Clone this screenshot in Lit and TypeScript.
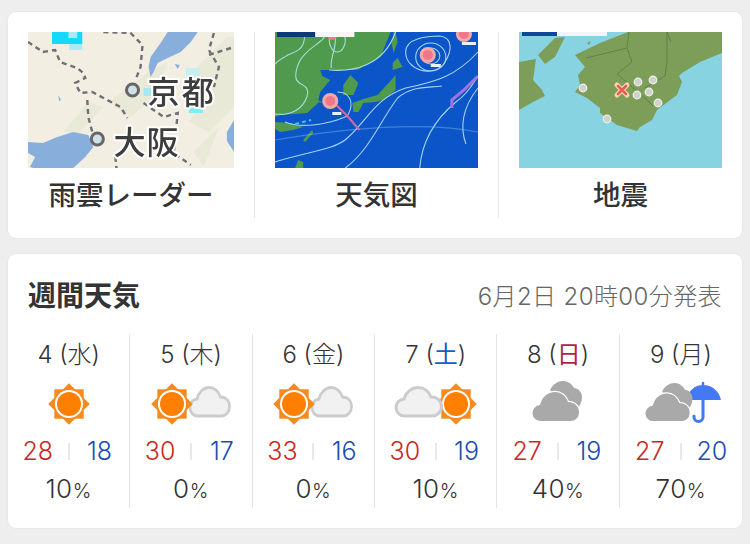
import { LitElement, html, css, svg } from "lit";
import { customElement } from "lit/decorators.js";

const sun = (cx: number, cy: number, r = 21) => {
  const s = r * 0.7;
  return svg`<g transform="translate(${cx} ${cy})">
    <rect x=${-s} y=${-s} width=${2 * s} height=${2 * s} fill="#f58a1f"/>
    <rect x=${-s} y=${-s} width=${2 * s} height=${2 * s} fill="#f58a1f" transform="rotate(45)"/>
    <circle r="14" fill="#fff"/><circle r="12" fill="#ff8000"/>
  </g>`;
};
const CLOUD = "M9 30a8.5 8.5 0 0 1-1-17C10 6 16 1.500 22 1.500c6 0 11 4 13 9.500c6-.5 10.500 4 10.500 9.500s-4.500 9.500-9.500 9.500z";
const lightCloud = (x: number, y: number, kx = 1) =>
  svg`<path transform="translate(${x} ${y}) scale(${kx} 1)" d=${CLOUD} fill="#f1f1f1" stroke="#cccccc" stroke-width="3"/>`;
const grayClouds = (x: number, y: number, k = 1) => svg`<g transform="translate(${x} ${y}) scale(${k})">
  <path d="M18 8c3-6 8-9 13-9c5 0 9 3 11 7c4 0 8 4 8 9c0 5-2 9-5 12l-7 2z" fill="#a9a9a9"/>
  <path d="M9 39a8 8 0 0 1-1-16C10 15 16 10 23 10c6 0 11 4 13 10c6 0 11 4 11 10s-4 9-9 9z" fill="#a9a9a9" stroke="#fff" stroke-width="2.500" paint-order="stroke"/>
</g>`;
const umbrella = (x: number, y: number) => svg`<g transform="translate(${x} ${y})">
  <path d="M-4 18C-2 9 5 3 13 3C22 3 29 9 31 18z" fill="#4379f5"/>
  <path d="M13 1v4" stroke="#4379f5" stroke-width="2.500" stroke-linecap="round"/>
  <path d="M13 16v19a4.500 4.500 0 0 1-9 0v-1" fill="none" stroke="#4379f5" stroke-width="3" stroke-linecap="round"/>
</g>`;

const ICONS: Record<string, unknown> = {
  sun: sun(50, 22),
  sunCloud: svg`${lightCloud(49, 4, 0.87)}${sun(31, 22)}`,
  cloudSun: svg`${sun(70, 22)}${lightCloud(10, 4)}`,
  clouds: svg`${grayClouds(24, 0)}`,
  cloudsRain: svg`${umbrella(59, 0)}${grayClouds(14, 2, 0.95)}`,
};

const DAYS = [
  { d: 4, w: "水", c: "", i: "sun", hi: 28, lo: 18, p: 10 },
  { d: 5, w: "木", c: "", i: "sunCloud", hi: 30, lo: 17, p: 0 },
  { d: 6, w: "金", c: "", i: "sunCloud", hi: 33, lo: 16, p: 0 },
  { d: 7, w: "土", c: "sat", i: "cloudSun", hi: 30, lo: 19, p: 10 },
  { d: 8, w: "日", c: "sunday", i: "clouds", hi: 27, lo: 19, p: 40 },
  { d: 9, w: "月", c: "", i: "cloudsRain", hi: 27, lo: 20, p: 70 },
];

const rainMap = svg`<svg class="map" viewBox="0 0 205 136" preserveAspectRatio="none">
  <defs>
    <filter id="b1" x="-5%" y="-5%" width="110%" height="110%"><feGaussianBlur stdDeviation="0.7"/></filter>
    <filter id="t1" x="-10%" y="-10%" width="120%" height="120%"><feGaussianBlur stdDeviation="0.45"/></filter>
  </defs>
  <rect width="205" height="136" fill="#f2efe2"/>
  <g filter="url(#b1)">
    <path d="M80 70l40-30 18-10-6 30-30 25zM168 35l30-30 7 0v70l-25 25-20-10 20-30zM165 120l25-25-15 40zM35 100l25-30 15 5-25 27z" fill="#e9e9d7"/>
    <path d="M139 0h30l-7 10-10 10-13 6-10 5-4 9-3 5-2-10 2-10 10-14z" fill="#88aedc"/>
    <path d="M0 110l15 1 14-6 16-5 15 3 5 12-8 10-12 11H5l-3-1 5-10-7-4z" fill="#88aedc"/>
    <path d="M205 88l-7 12v9l7 11zM146 32l5 1-2 4zM30 63l3 5-2 1z" fill="#88aedc"/>
    <rect x="24" y="0" width="30" height="12" fill="#18d8fb"/>
    <rect x="40" y="0" width="9" height="6" fill="#a6ecf2"/>
    <rect x="41" y="12" width="13" height="6" fill="#a6ecf2"/>
    <rect x="24" y="0" width="16" height="11" fill="#18d8fb"/>
    <rect x="157" y="36" width="14" height="10" fill="#c8eeee"/>
    <rect x="160" y="74" width="14" height="7" fill="#80ecf4"/>
    <rect x="115" y="56" width="9" height="8" fill="#a8e6f2"/>
    <g fill="none" stroke="#6f6f74" stroke-width="2.400" stroke-dasharray="5 4">
      <path d="M0 10L15 20L27 18L32 30L49 36L55 41L57 46L47 51L52 61L64 60L79 68L92 75L99 86"/>
      <path d="M75 0L102 1L114 13L112 35L107 48"/>
      <path d="M59 68L60 85L64 100"/>
      <path d="M115 71L135 85L149 81L145 121L162 133"/>
      <path d="M185 1L180 18L190 35L185 55M202 16L180 23"/>
      <path d="M87 125L88 136"/>
    </g>
  </g>
  <circle cx="104" cy="58" r="6" fill="#cfe0e6" stroke="#66666a" stroke-width="3"/>
  <circle cx="69" cy="107" r="6" fill="#cfe0e6" stroke="#66666a" stroke-width="3"/>
  <g class="mapLabel" filter="url(#t1)" font-size="32" fill="#3d3d3d" stroke="#ffffff" stroke-width="4" paint-order="stroke" stroke-linejoin="round">
    <text x="119" y="72" textLength="66">京都</text>
    <text x="85" y="122" textLength="65">大阪</text>
  </g>
</svg>`;

const chartMap = svg`<svg class="map" viewBox="0 0 202 136" preserveAspectRatio="none">
  <defs><filter id="b2" x="-5%" y="-5%" width="110%" height="110%"><feGaussianBlur stdDeviation="0.7"/></filter></defs>
  <rect width="202" height="136" fill="#0b55c8"/>
  <g filter="url(#b2)">
    <path d="M0 0H115L105 25L82 38L57 38L45 38L47 44L55 48L45 60L43 68L50 72L44 70L32 81L5 83L0 85z" fill="#4f9a4e"/>
    <path d="M0 90L15 91L28 95L18 98L5 100L0 97z" fill="#4f9a4e"/>
    <path d="M68 53L75 43L83 51L78 63L68 63z" fill="#4f9a4e"/>
    <path d="M77 71L88 67L102 63L113 51L120 43L120 58L108 68L100 70L88 71L83 80L78 80z" fill="#4f9a4e"/>
    <path d="M117 31L122 26L127 35L117 38z" fill="#4f9a4e"/>
    <path d="M118 0L120 0L122 10L118 21L116 12z" fill="#4f9a4e"/>
    <path d="M28 108L37 98L38 101L30 110z" fill="#4f9a4e"/>
    <path d="M20 136L23 128L28 130L28 136z" fill="#4f9a4e"/>
    <g fill="none" stroke="#a9dbd8" stroke-width="1.100">
      <path d="M0 32C12 20 24 22 28 12C30 6 30 2 28 0M0 82C14 84 28 78 32 64C36 46 12 60 24 30C32 14 52 10 50 0"/>
      <path d="M54 38C78 40 108 34 120 0M60 0C62 18 54 26 56 36"/>
      <ellipse cx="62" cy="8" rx="8" ry="12"/>
    </g>
    <g fill="none" stroke="#a3d2f2" stroke-width="1.100">
      <path d="M0 130C30 120 60 118 72 106C92 88 100 66 130 56C160 50 180 44 202 20"/>
      <path d="M70 136C94 118 104 90 122 66C136 54 150 56 166 54"/>
      <path d="M144 136C146 112 156 90 180 70C192 62 198 50 202 44"/>
      <path d="M190 112C184 96 186 76 202 56"/>
      <path d="M10 90C24 96 50 94 72 84C80 70 74 60 62 60"/>
      <path d="M130 20C130 6 152 4 164 4C178 6 176 20 168 32C156 46 130 38 130 20z"/>
      <ellipse cx="155" cy="25" rx="15" ry="14"/>
      <ellipse cx="155" cy="24" rx="9" ry="8"/>
      <path d="M0 108C60 98 140 88 202 100" opacity=".35"/>
    </g>
    <path d="M60 72L72 84L84 98" fill="none" stroke="#d66aa0" stroke-width="2"/>
    <path d="M20 92L36 88" fill="none" stroke="#3fc0e8" stroke-width="2" stroke-dasharray="4 3"/>
    <path d="M202 44L188 58L176 68L176 76" fill="none" stroke="#a073e0" stroke-width="3"/>
    <circle cx="55" cy="69" r="6.500" fill="#f0768a" stroke="#f4a8a8" stroke-width="3"/>
    <circle cx="152" cy="23" r="6.500" fill="#f0768a" stroke="#f4a8a8" stroke-width="3"/>
    <circle cx="188" cy="2" r="6.500" fill="#f0768a" stroke="#f4a8a8" stroke-width="3"/>
    <circle cx="57" cy="3" r="5" fill="#f0768a"/>
    <rect x="2" y="0" width="38" height="5" fill="#0d3a7a"/>
    <rect x="40" y="0" width="39" height="5" fill="#f5f5f5"/>
    <g fill="#e8f0f8"><rect x="57" y="80" width="9" height="3"/><rect x="155" y="32" width="10" height="3"/><rect x="186" y="10" width="14" height="3"/></g>
  </g>
</svg>`;

const quakeMarks = [[119, 50], [134, 48], [130, 60], [118, 63], [64, 56], [139, 71], [88, 87]];
const quakeMap = svg`<svg class="map" viewBox="0 0 203 136" preserveAspectRatio="none">
  <defs><filter id="b3" x="-5%" y="-5%" width="110%" height="110%"><feGaussianBlur stdDeviation="0.5"/></filter></defs>
  <rect width="203" height="136" fill="#87d3e2"/>
  <g filter="url(#b3)">
    <path d="M56 23L81 11L109 0H203V21L181 30L163 41L160 44L163 50L158 63L138 78L133 88L121 95L118 99L98 93L81 81L81 76L68 66L56 60L61 53L59 43L66 35z" fill="#7d9e58"/>
    <path d="M0 30L17 27L14 48L23 58L26 64L14 70L0 78z" fill="#7d9e58"/>
    <path d="M19 23L36 6L46 5L36 25L26 32z" fill="#7d9e58"/>
    <path d="M68 11L72 9L70 13z" fill="#7d9e58"/>
    <g fill="none" stroke="#5e7d47" stroke-width=".9">
      <path d="M67 26L108 16L113 30L98 42L112 54L126 66L134 74M108 16L110 0M148 0L148 30L146 44L136 50L126 56M148 0L152 10"/>
    </g>
    ${quakeMarks.map(([x, y]) => svg`<circle cx=${x} cy=${y} r="3.800" fill="#cfd4cb" stroke="#f1f1ee" stroke-width="1.200"/>`)}
    <path d="M98 53L108 63M108 53L98 63" stroke="#f5d6a5" stroke-width="5" stroke-linecap="round"/>
    <path d="M99 54L107 62M107 54L99 62" stroke="#ea5a5a" stroke-width="2.500" stroke-linecap="round"/>
    <rect x="3" y="0" width="35" height="4" fill="#0d4a96"/>
    <rect x="38" y="0" width="50" height="4" fill="#f2f4fa"/>
  </g>
</svg>`;

@customElement("app-root")
export class AppRoot extends LitElement {
  static styles = css`
    :host {
      display: block;
      width: 750px;
      height: 544px;
      box-sizing: border-box;
      padding: 12px 8px 0;
      background: #eeeeee;
      font-family: Inter, "Noto Sans CJK JP", sans-serif;
      color: #333;
      overflow: hidden;
    }
    .card {
      background: #fff;
      border-radius: 8px;
      box-shadow: 0 0 2px rgba(0, 0, 0, 0.08);
    }
    .links {
      display: grid;
      grid-template-columns: 247px 244px 243px;
      height: 226px;
      box-sizing: border-box;
      padding-top: 20px;
      margin-bottom: 16px;
    }
    .link {
      height: 186px;
      padding: 0 20px;
      box-sizing: border-box;
      border-right: 1.500px solid #e8e8e8;
      display: flex;
      flex-direction: column;
    }
    .link:last-child { border-right: 0; }
    .map { display: block; width: 100%; height: 136px; flex: none; }
    .mapLabel { font-family: "Noto Sans CJK JP", sans-serif; font-weight: 500; }
    .name {
      height: 58px;
      display: flex;
      align-items: center;
      justify-content: center;
      font-size: 27.500px;
      font-weight: 500;
      white-space: nowrap;
      color: #333;
    }
    .week { height: 274px; box-sizing: border-box; }
    .head {
      height: 80px;
      padding: 0 20px;
      display: flex;
      align-items: center;
      justify-content: space-between;
    }
    .title { font-size: 28px; font-weight: 700; color: #333; }
    .stamp { font-size: 24px; font-weight: 300; color: #666; letter-spacing: 0.4px; }
    .days { display: grid; grid-template-columns: repeat(6, 1fr); height: 174px; }
    .day {
      display: flex;
      flex-direction: column;
      align-items: center;
      border-right: 1.500px solid #e4e4e4;
      min-width: 0;
    }
    .day:last-child { border-right: 0; }
    .date {
      font-size: 24px;
      font-weight: 300;
      height: 38px;
      line-height: 38px;
      padding-top: 2px;
      color: #333;
      white-space: nowrap;
    }
    .sat { color: #0f5fc8; font-weight: 400; }
    .sunday { color: #b81c4c; font-weight: 400; }
    .icon { display: block; width: 100px; height: 44px; margin-top: 8px; flex: none; overflow: visible; }
    .temps {
      display: grid;
      grid-template-columns: 1fr 2px 1fr;
      align-items: center;
      justify-items: center;
      width: 100%;
      height: 38px;
      margin-top: 6px;
      font-size: 25px;
      font-weight: 300;
    }
    .hi { color: #c9281c; }
    .lo { color: #1a4db0; }
    .sep { width: 2px; height: 17px; background: #e8e8e8; }
    .pct { font-size: 26px; font-weight: 300; height: 38px; line-height: 38px; color: #333; letter-spacing: 0.5px; }
    .pct small { font-size: 20px; }
  `;

  render() {
    return html`
      <section class="card links">
        <div class="link">${rainMap}<div class="name">雨雲レーダー</div></div>
        <div class="link">${chartMap}<div class="name">天気図</div></div>
        <div class="link">${quakeMap}<div class="name">地震</div></div>
      </section>
      <section class="card week">
        <header class="head">
          <div class="title">週間天気</div>
          <div class="stamp">6月2日 20時00分発表</div>
        </header>
        <div class="days">
          ${DAYS.map(
            (x) => html`<div class="day">
              <div class="date">${x.d} (<span class=${x.c}>${x.w}</span>)</div>
              <svg class="icon" viewBox="0 0 100 44">${ICONS[x.i]}</svg>
              <div class="temps"><span class="hi">${x.hi}</span><span class="sep"></span><span class="lo">${x.lo}</span></div>
              <div class="pct">${x.p}<small>%</small></div>
            </div>`
          )}
        </div>
      </section>
    `;
  }
}
